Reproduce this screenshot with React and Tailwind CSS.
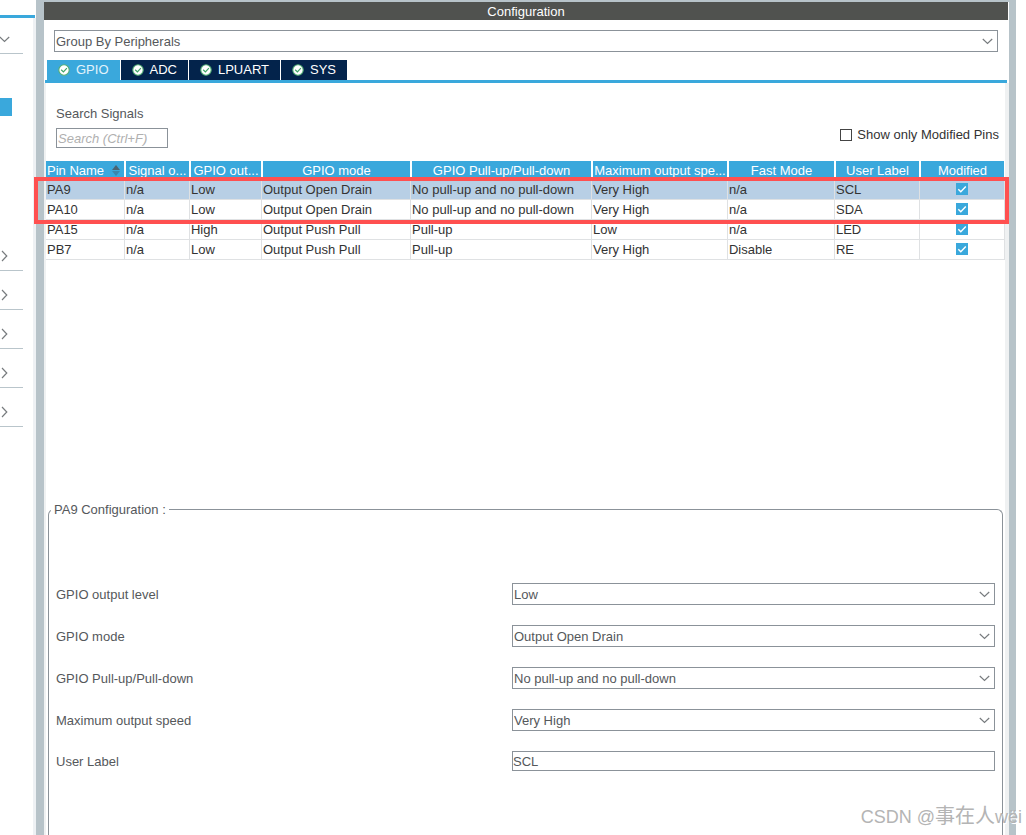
import { useState } from 'react';

const TABS = ['GPIO', 'ADC', 'LPUART', 'SYS'];

const COLUMNS = [
  { label: 'Pin Name', width: 79 },
  { label: 'Signal o...', width: 65 },
  { label: 'GPIO out...', width: 72 },
  { label: 'GPIO mode', width: 149 },
  { label: 'GPIO Pull-up/Pull-down', width: 181 },
  { label: 'Maximum output spe...', width: 136 },
  { label: 'Fast Mode', width: 107 },
  { label: 'User Label', width: 85 },
  { label: 'Modified', width: 85 },
];
const TOTAL_WIDTH = COLUMNS.reduce((sum, c) => sum + c.width, 0);

const PINS = [
  { name: 'PA9', signal: 'n/a', level: 'Low', mode: 'Output Open Drain', pull: 'No pull-up and no pull-down', speed: 'Very High', fast: 'n/a', label: 'SCL' },
  { name: 'PA10', signal: 'n/a', level: 'Low', mode: 'Output Open Drain', pull: 'No pull-up and no pull-down', speed: 'Very High', fast: 'n/a', label: 'SDA' },
  { name: 'PA15', signal: 'n/a', level: 'High', mode: 'Output Push Pull', pull: 'Pull-up', speed: 'Low', fast: 'n/a', label: 'LED' },
  { name: 'PB7', signal: 'n/a', level: 'Low', mode: 'Output Push Pull', pull: 'Pull-up', speed: 'Very High', fast: 'Disable', label: 'RE' },
];

const FIELDS = [
  { id: 'level', label: 'GPIO output level', options: ['Low', 'High'] },
  { id: 'mode', label: 'GPIO mode', options: ['Output Open Drain', 'Output Push Pull'] },
  { id: 'pull', label: 'GPIO Pull-up/Pull-down', options: ['No pull-up and no pull-down', 'Pull-up', 'Pull-down'] },
  { id: 'speed', label: 'Maximum output speed', options: ['Low', 'Medium', 'High', 'Very High'] },
];

function ChevronDown({ className }) {
  return (
    <svg className={className} width="11" height="7" viewBox="0 0 11 7" fill="none" stroke="#777b7e" strokeWidth="1.2">
      <path d="M0.8 1 L5.5 5.4 L10.2 1" />
    </svg>
  );
}

function ChevronRight() {
  return (
    <svg width="7" height="12" viewBox="0 0 7 12" fill="none" stroke="#777b7e" strokeWidth="1.2">
      <path d="M1 1 L5.8 6 L1 11" />
    </svg>
  );
}

function TabCheck() {
  return (
    <svg width="12" height="12" viewBox="0 0 12 12" fill="none">
      <circle cx="6" cy="6" r="5.2" fill="#fff" stroke="#52ae74" strokeWidth="1.1" />
      <path d="M3.2 5.8 L5.4 7.9 L8.9 4.1" stroke="#3fa566" strokeWidth="1.2" />
    </svg>
  );
}

function SortIcon() {
  return (
    <svg width="8" height="11" viewBox="0 0 8 11">
      <path d="M4 0 L8 5 H0 Z" fill="#4a6472" />
      <path d="M0 6 H8 L4 11 Z" fill="#3c87ad" />
    </svg>
  );
}

function Select({ id, value, onChange, options, label }) {
  return (
    <div className="relative">
      <select
        id={id}
        aria-label={label}
        value={value}
        onChange={e => onChange(e.target.value)}
        className="block w-full h-[22px] appearance-none border border-[#8b9299] bg-white pl-px pr-6 pt-px text-[#55585b] outline-none"
      >
        {options.map(o => <option key={o} value={o}>{o}</option>)}
      </select>
      <ChevronDown className="pointer-events-none absolute right-[5px] top-2" />
    </div>
  );
}

function Sidebar() {
  return (
    <aside className="flex w-9 shrink-0 flex-col bg-white pt-[15px]">
      <div className="mr-px h-[3px] bg-[#3aa8dc]" />
      <div className="flex-1 border-r-[3px] border-[#eef1f4]">
        <button aria-label="Collapse category" className="flex h-9 w-[23px] items-center border-b border-[#b9c5cb] pt-2">
          <ChevronDown className="-ml-px" />
        </button>
        <div className="mt-11 h-[18px] w-3 bg-[#3aa8dc]" />
        <div className="mt-29">
          {[1, 2, 3, 4, 5].map(n => (
            <button key={n} aria-label={`Expand category ${n}`} className="flex h-[39px] w-[23px] items-center border-b border-[#b9c5cb] pl-px pt-2.5">
              <ChevronRight />
            </button>
          ))}
        </div>
      </div>
    </aside>
  );
}

function PinTable({ selected, onSelect }) {
  return (
    <div className="relative">
      <table className="w-full table-fixed border-separate border-spacing-0">
        <colgroup>
          {COLUMNS.map(c => <col key={c.label} style={{ width: `${(c.width / TOTAL_WIDTH) * 100}%` }} />)}
        </colgroup>
        <thead>
          <tr className="h-[19px] bg-[#3aa8dc] text-white">
            {COLUMNS.map((c, i) => (
              <th key={c.label} className="overflow-hidden whitespace-nowrap border-l border-r border-white p-0 text-center font-normal leading-[19px] first:border-l-0">
                {i === 0 ? (
                  <span className="flex items-center justify-between pl-px pr-1">{c.label}<SortIcon /></span>
                ) : c.label}
              </th>
            ))}
          </tr>
        </thead>
        <tbody className="text-[#333]">
          {PINS.map((pin, i) => (
            <tr key={pin.name} onClick={() => onSelect(i)} className={i === selected ? 'bg-[#b8cfe5]' : 'bg-white'}>
              {Object.values(pin).map((text, j) => (
                <td key={j} className="h-5 truncate border-b border-r border-[#dfe1e3] px-px py-0 leading-[19px]">{text}</td>
              ))}
              <td className="h-5 border-b border-r border-[#dfe1e3] p-0 pt-[3px] align-top">
                <span className="relative mx-auto block size-3">
                  <input type="checkbox" defaultChecked aria-label={`${pin.name} modified`} className="peer block size-3 appearance-none border border-[#3aa8dc] checked:bg-[#3aa8dc]" />
                  <svg className="pointer-events-none absolute inset-0 hidden peer-checked:block" width="12" height="12" viewBox="0 0 12 12" fill="none" stroke="#fff" strokeWidth="1.4">
                    <path d="M2.3 6.2 L4.8 8.7 L9.8 3.4" />
                  </svg>
                </span>
              </td>
            </tr>
          ))}
        </tbody>
      </table>
      {/* highlight around the two I2C pins */}
      <div className="pointer-events-none absolute -left-3 -right-1 top-4 h-[47px] border-4 border-[#ff5050]" />
    </div>
  );
}

export default function App() {
  const [tab, setTab] = useState('GPIO');
  const [group, setGroup] = useState('Group By Peripherals');
  const [selected, setSelected] = useState(0);
  const [pins, setPins] = useState(PINS);

  const pin = pins[selected];
  const update = (key, value) => setPins(pins.map((p, i) => (i === selected ? { ...p, [key]: value } : p)));

  return (
    <div className="relative flex min-h-screen overflow-hidden bg-white font-['Liberation_Sans',Arial,sans-serif] text-[13px] text-[#55585b]">
      <Sidebar />
      <div className="flex min-w-0 flex-1 border-l-8 border-r-[7px] border-t-2 border-[#b7c3c9]">
        <main className="flex min-w-0 flex-1 flex-col bg-white">
          <h1 className="mr-px h-[18px] bg-[#50524f] text-center leading-5 text-white">Configuration</h1>

          <div className="pl-2.5 pr-[11px] pt-2.5">
            <Select id="group" label="Grouping" value={group} onChange={setGroup} options={['Group By Peripherals', 'Group By IP']} />
          </div>

          <nav className="ml-[3px] mt-2 flex gap-px">
            {TABS.map(t => (
              <button
                key={t}
                onClick={() => setTab(t)}
                className={`flex h-5 items-center gap-1.5 px-[11px] ${t === tab ? 'bg-[#3aa8dc] text-[#e2f3fb]' : 'bg-[#03234b] text-white'}`}
              >
                <TabCheck />
                {t}
              </button>
            ))}
          </nav>
          <div className="ml-px mr-0.5 h-[3px] bg-[#3aa8dc]" />

          <div className="flex flex-1 flex-col border-l-2 border-r-4 border-[#eff1f2] pt-5">
            <div className="flex items-end justify-between pl-2.5 pr-1.5">
              <div>
                <label htmlFor="search" className="block h-5 leading-[22px]">Search Signals</label>
                <input
                  id="search"
                  type="text"
                  placeholder="Search (Ctrl+F)"
                  className="mt-[5px] block h-5 w-28 border border-[#8b9299] px-px outline-none placeholder:italic placeholder:text-[#b0b0b0]"
                />
              </div>
              <label className="flex h-[23px] items-center gap-[5px] pb-[3px] leading-[22px] text-[#333]">
                <input type="checkbox" className="size-3 appearance-none border border-[#444] bg-white checked:bg-[#3aa8dc]" />
                Show only Modified Pins
              </label>
            </div>

            <div className="mt-[13px] min-h-[338px]">
              <PinTable selected={selected} onSelect={setSelected} />
            </div>

            <fieldset className="mx-0.5 flex-1 rounded-t-md border border-b-0 border-[#8b9299] px-0.5">
              <legend className="h-5 px-[3px] leading-[22px]">{pin.name} Configuration :</legend>
              <div className="grid grid-cols-[456fr_483fr] items-center gap-y-5 px-[5px] pb-16 pt-16">
                {FIELDS.map(f => (
                  <div key={f.id} className="contents">
                    <label htmlFor={f.id} className="pt-0.5">{f.label}</label>
                    <Select id={f.id} value={pin[f.id]} onChange={v => update(f.id, v)} options={f.options} />
                  </div>
                ))}
                <label htmlFor="userLabel" className="h-5 leading-[22px]">User Label</label>
                <input
                  id="userLabel"
                  type="text"
                  value={pin.label}
                  onChange={e => update('label', e.target.value)}
                  className="h-5 w-full border border-[#8b9299] bg-white p-0 outline-none"
                />
              </div>
            </fieldset>
          </div>
        </main>
      </div>
      <div className="w-2.5 shrink-0 bg-white" />

      <div className="pointer-events-none absolute bottom-1 right-1 font-['Liberation_Sans','Noto_Sans_CJK_SC',sans-serif] text-lg leading-7 text-[#b4b4b4] [text-shadow:1px_1px_0_#fff]">
        CSDN @<span className="text-xl leading-7">事在人</span>wëi
      </div>
    </div>
  );
}
